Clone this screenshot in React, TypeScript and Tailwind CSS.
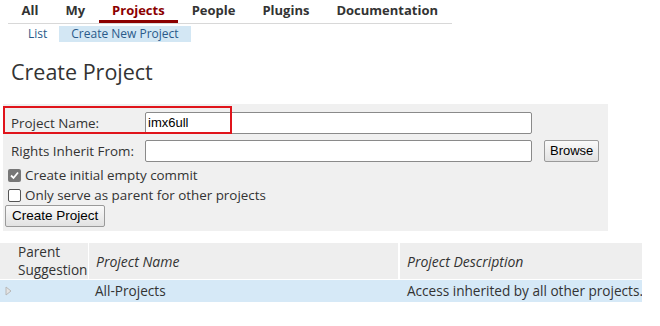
import React from "react";

const tabs = ["All", "My", "Projects", "People", "Plugins", "Documentation"];

export default function App() {
  return (
    <div className="w-[660px] h-[326px] bg-white overflow-hidden font-['Open_Sans',sans-serif] text-[#333]">
      {/* Top menu */}
      <div className="ml-2 w-[444px] border-b border-[#d8d8d8] flex h-[24px] items-end">
        {tabs.map((t) => (
          <div
            key={t}
            className={
              "px-[13.5px] h-[24px] flex items-center text-[13px] font-bold " +
              (t === "Projects" ? "text-[#8b0000] border-b-[3px] border-[#8b0000] pt-[2px]" : "")
            }
          >
            {t}
          </div>
        ))}
      </div>

      {/* Sub menu */}
      <div className="flex ml-[22px] mt-[2px] text-[12px] text-[#2a5a8a] h-[16px] items-center">
        <div className="px-[6px]">List</div>
        <div className="ml-[6px] px-3 bg-[#d3e7f4] h-[16px] leading-[16px]">Create New Project</div>
      </div>

      <h1 className="ml-[11px] mt-[14px] text-[21.5px] font-normal">Create Project</h1>

      {/* Form panel */}
      <div className="ml-[3px] mt-[16px] w-[605px] h-[127px] bg-[#f0f0f0] text-[13.4px] pt-[2px]">
        <div className="relative flex items-center h-[29px]">
          <div className="absolute left-0 top-0 w-[229px] h-[28px] border-2 border-[#e0141b] pointer-events-none" />
          <span className="ml-2 w-[134px] mt-[5px]">Project Name:</span>
          <div className="w-[387px] h-[22px] border border-[#8a8a8a] bg-white rounded-[2px] font-['Liberation_Sans',sans-serif] text-[13px] text-black pl-[2px] leading-[20px] mt-[5px]">
            imx6ull
          </div>
        </div>
        <div className="flex items-center h-[30px] pt-[1px]">
          <span className="ml-2 w-[134px]">Rights Inherit From:</span>
          <div className="w-[387px] h-[22px] border border-[#8a8a8a] bg-white rounded-[2px]" />
          <button className="ml-3 h-[22px] px-[5px] border border-[#9a9a9a] rounded-[2px] bg-gradient-to-b from-[#fafafa] to-[#e2e2e2] font-['Liberation_Sans',sans-serif] text-[13px] text-black">
            Browse
          </button>
        </div>
        <label className="flex items-center h-[20px] ml-[5px]">
          <span className="w-[13px] h-[13px] rounded-[2px] bg-[#777] flex items-center justify-center mr-[4px]">
            <svg width="11" height="11" viewBox="0 0 11 11">
              <path d="M2 5.5 L4.5 8 L9 2.5" stroke="white" strokeWidth="1.8" fill="none" />
            </svg>
          </span>
          Create initial empty commit
        </label>
        <label className="flex items-center h-[20px] ml-[5px]">
          <span className="w-[13px] h-[13px] rounded-[2px] border border-[#555] bg-white mr-[4px]" />
          Only serve as parent for other projects
        </label>
        <button className="ml-[2px] h-[22px] px-[6px] border border-[#9a9a9a] rounded-[2px] bg-gradient-to-b from-[#fafafa] to-[#e2e2e2] font-['Liberation_Sans',sans-serif] text-[13.5px] text-black">
          Create Project
        </button>
      </div>

      {/* Table */}
      <div className="mt-[12px] w-[642px] text-[13.6px]">
        <div className="flex bg-[#eeeeee] h-[36px]">
          <div className="w-[89px] border-r border-white pl-[18px] leading-[18px]">
            Parent
            <br />
            Suggestion
          </div>
          <div className="w-[311px] border-r-2 border-white pl-[7px] flex items-center italic text-[14px]">Project Name</div>
          <div className="flex-1 pl-[7px] flex items-center italic text-[14px]">Project Description</div>
        </div>
        <div className="flex bg-[#d6e9f7] h-[22px] items-center mt-[1px]">
          <div className="w-[89px] pl-[5px] flex items-center">
            <svg width="7" height="10" viewBox="0 0 7 10">
              <path d="M1 1 L6 5 L1 9 Z" fill="#e4e4e4" stroke="#b8b8b8" strokeWidth="1" />
            </svg>
          </div>
          <div className="w-[311px] pl-[6px]">All-Projects</div>
          <div className="flex-1 pl-[7px] whitespace-nowrap overflow-hidden">Access inherited by all other projects.</div>
        </div>
      </div>
    </div>
  );
}
